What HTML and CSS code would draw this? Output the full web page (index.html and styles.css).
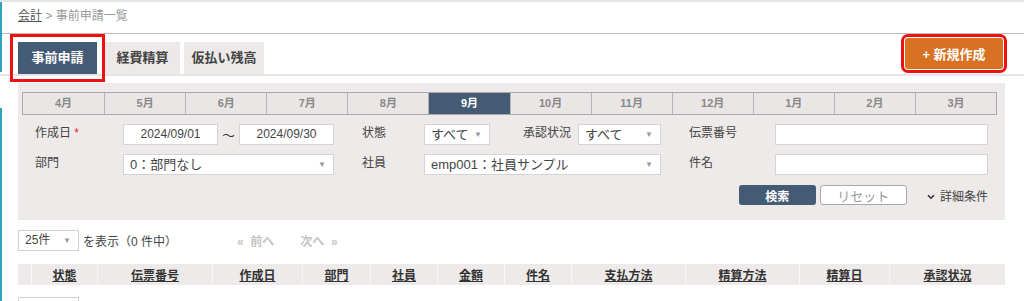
FILE: index.html
```html
<!DOCTYPE html>
<html lang="ja">
<head>
    <meta charset="UTF-8">
    <meta name="viewport" content="width=device-width, initial-scale=1.0">
    <title>事前申請一覧</title>
    <link rel="stylesheet" href="styles.css">
</head>
<body>
    <span class="edge edge-top"></span>
    <span class="edge edge-bottom"></span>

    <div class="breadcrumb">
        <a href="#">会計</a> &gt; 事前申請一覧
    </div>

    <div class="tabbar">
        <div class="tabs">
            <div class="tab active marked">事前申請</div>
            <div class="tab t2">経費精算</div>
            <div class="tab t3">仮払い残高</div>
        </div>
        <button class="new-btn marked">+ 新規作成</button>
    </div>

    <div class="panel">
        <div class="months">
            <div class="month">4月</div>
            <div class="month">5月</div>
            <div class="month">6月</div>
            <div class="month">7月</div>
            <div class="month">8月</div>
            <div class="month active">9月</div>
            <div class="month">10月</div>
            <div class="month">11月</div>
            <div class="month">12月</div>
            <div class="month">1月</div>
            <div class="month">2月</div>
            <div class="month">3月</div>
        </div>

        <div class="form">
            <div class="label">作成日 <span class="req">*</span></div>
            <div class="field">
                <div class="input date">2024/09/01</div>
                <span class="tilde">〜</span>
                <div class="input date">2024/09/30</div>
            </div>
            <div class="label pad">状態</div>
            <div class="field">
                <div class="select s-state">すべて<span class="arrow">▼</span></div>
                <span class="inline-label">承認状況</span>
                <div class="select s-approve">すべて<span class="arrow">▼</span></div>
            </div>
            <div class="label pad">伝票番号</div>
            <div class="field"><div class="input wide"></div></div>

            <div class="label">部門</div>
            <div class="field"><div class="select wide">0：部門なし<span class="arrow">▼</span></div></div>
            <div class="label pad">社員</div>
            <div class="field"><div class="select wide">emp001：社員サンプル<span class="arrow">▼</span></div></div>
            <div class="label pad">件名</div>
            <div class="field"><div class="input wide"></div></div>
        </div>

        <div class="actions">
            <button class="btn search">検索</button>
            <button class="btn reset">リセット</button>
            <span class="more">
                <svg width="8" height="6" viewBox="0 0 8 6"><path d="M1 1.2 L4 4.2 L7 1.2" fill="none" stroke="#333" stroke-width="1.6"/></svg>
                詳細条件
            </span>
        </div>
    </div>

    <div class="pager">
        <div class="select per-page">25件<span class="arrow">▼</span></div>
        <span class="count">を表示（0 件中）</span>
        <span class="nav prev">«&nbsp; 前へ</span>
        <span class="nav next">次へ &nbsp;»</span>
    </div>

    <table class="list">
        <thead>
            <tr>
                <th class="c0"></th>
                <th class="c1"><a href="#">状態</a></th>
                <th class="c2"><a href="#">伝票番号</a></th>
                <th class="c3"><a href="#">作成日</a></th>
                <th class="c4"><a href="#">部門</a></th>
                <th class="c5"><a href="#">社員</a></th>
                <th class="c6"><a href="#">金額</a></th>
                <th class="c7"><a href="#">件名</a></th>
                <th class="c8"><a href="#">支払方法</a></th>
                <th class="c9"><a href="#">精算方法</a></th>
                <th class="c10"><a href="#">精算日</a></th>
                <th class="c11"><a href="#">承認状況</a></th>
            </tr>
        </thead>
    </table>

    <div class="pager bottom">
        <div class="select per-page"></div>
    </div>
</body>
</html>
```

FILE: styles.css
```css
body {
    margin: 0;
    font-family: "Liberation Sans", "Noto Sans CJK JP", sans-serif;
    font-size: 12px;
    color: #333;
    background: #fff;
    border-top: 2px solid #e4e4e4;
    position: relative;
    overflow: hidden;
}
/* left sidebar edge */
.edge {
    position: absolute;
    left: 0;
    width: 2px;
    background: #2fa3bb;
}
.edge-top { top: -2px; height: 72px; }
.edge-bottom { top: 106px; height: 300px; }

.breadcrumb {
    height: 31px;
    line-height: 29px;
    padding-left: 18px;
    font-size: 12px;
    color: #999;
    border-bottom: 1px solid #bdbdbd;
}
.breadcrumb a {
    color: #555;
}

.tabbar {
    display: flex;
    justify-content: space-between;
    align-items: flex-start;
    height: 40px;
    border-bottom: 2px solid #e6e6e6;
}
.tabs {
    display: flex;
    gap: 4px;
    padding: 8px 0 0 18px;
}
.tab {
    height: 32px;
    line-height: 32px;
    text-align: center;
    background: #ece9e8;
    color: #444;
    font-weight: bold;
    font-size: 13px;
}
.tab.t2 { width: 75px; }
.tab.t3 { width: 80px; }
.tab.active {
    width: 79px;
    margin-right: 4px;
    background: #445b76;
    color: #fff;
}
.marked {
    outline: 3px solid #ee1111;
}
.tab.marked { outline-offset: 5px; }

.new-btn {
    margin: 4px 21px 0 0;
    width: 98px;
    height: 31px;
    border: none;
    border-radius: 3px;
    background: #d97122;
    color: #fff;
    font-family: inherit;
    font-size: 13px;
    font-weight: bold;
    outline-offset: 1px;
}

.panel {
    margin: 7px 19px 0 18px;
    padding: 9px 8px 15px 4px;
    background: #edeae9;
}
.months {
    display: grid;
    grid-template-columns: repeat(12, 1fr);
    border: 1px solid #a9a9a9;
    background: #e9e6e5;
}
.month {
    height: 21px;
    line-height: 21px;
    text-align: center;
    font-size: 11px;
    font-weight: bold;
    color: #888;
    border-left: 1px solid #b5b5b5;
}
.month:first-child { border-left: none; }
.month.active {
    background: #445b76;
    color: #fff;
}

.form {
    display: grid;
    grid-template-columns: 88px 211px 90px 237px 114px 213px;
    grid-auto-rows: 21px;
    row-gap: 9px;
    margin: 9px 0 0 13px;
}
.label {
    line-height: 19px;
    color: #444;
    white-space: nowrap;
}
.label.pad { padding-left: 28px; }
.req { color: #e23; }
.field {
    display: flex;
    align-items: center;
}
.input, .select {
    box-sizing: border-box;
    height: 21px;
    line-height: 19px;
    background: #fff;
    border: 1px solid #d4d4d4;
    color: #444;
    flex-shrink: 0;
}
.input.date {
    width: 95px;
    text-align: center;
}
.tilde {
    width: 21px;
    text-align: center;
    font-size: 13px;
}
.wide { width: 100%; }
.select {
    position: relative;
    padding-left: 6px;
    font-size: 13px;
}
.arrow {
    position: absolute;
    right: 7px;
    top: 0;
    font-size: 8px;
    color: #999;
}
.s-state { width: 66px; }
.inline-label {
    margin: 0 7px 0 33px;
    color: #444;
    white-space: nowrap;
    line-height: 19px;
    align-self: flex-start;
}
.s-approve { width: 83px; }

.actions {
    display: flex;
    justify-content: flex-end;
    align-items: center;
    margin: 10px 9px 0 0;
}
.btn {
    height: 20px;
    border-radius: 3px;
    font-family: inherit;
    font-size: 12px;
    padding: 0;
}
.btn.search {
    width: 77px;
    border: none;
    background: #445b76;
    color: #fff;
    font-weight: bold;
}
.btn.reset {
    width: 87px;
    margin-left: 4px;
    border: 1px solid #a9a9a9;
    background: #fff;
    color: #999;
    font-size: 13px;
}
.more {
    margin-left: 20px;
    color: #444;
}
.more svg { margin-right: 2px; vertical-align: 1px; }

.pager {
    display: flex;
    align-items: center;
    margin: 10px 0 0 18px;
}
.per-page {
    width: 61px;
    border-color: #d0d0d0;
    font-size: 12px;
}
.count {
    margin-left: 4px;
    color: #444;
}
.nav {
    color: #c4c4c4;
    font-weight: bold;
}
.prev { margin-left: 60px; }
.next { margin-left: 26px; }

.list {
    margin: 13px 0 0 18px;
    width: 987px;
    border-collapse: collapse;
    background: #edeae9;
    table-layout: fixed;
}
.list th {
    height: 21px;
    padding: 0;
    border-left: 1px solid #f7f6f6;
    font-size: 12px;
    font-weight: bold;
}
.list th:first-child { border-left: none; }
.list th a { color: #333; }
.c0 { width: 13px; }
.c1 { width: 65px; }
.c2 { width: 114px; }
.c3 { width: 89px; }
.c4 { width: 67px; }
.c5 { width: 66px; }
.c6 { width: 66px; }
.c7 { width: 66px; }
.c8 { width: 113px; }
.c9 { width: 113px; }
.c10 { width: 89px; }

.pager.bottom { margin-top: 12px; }
```
